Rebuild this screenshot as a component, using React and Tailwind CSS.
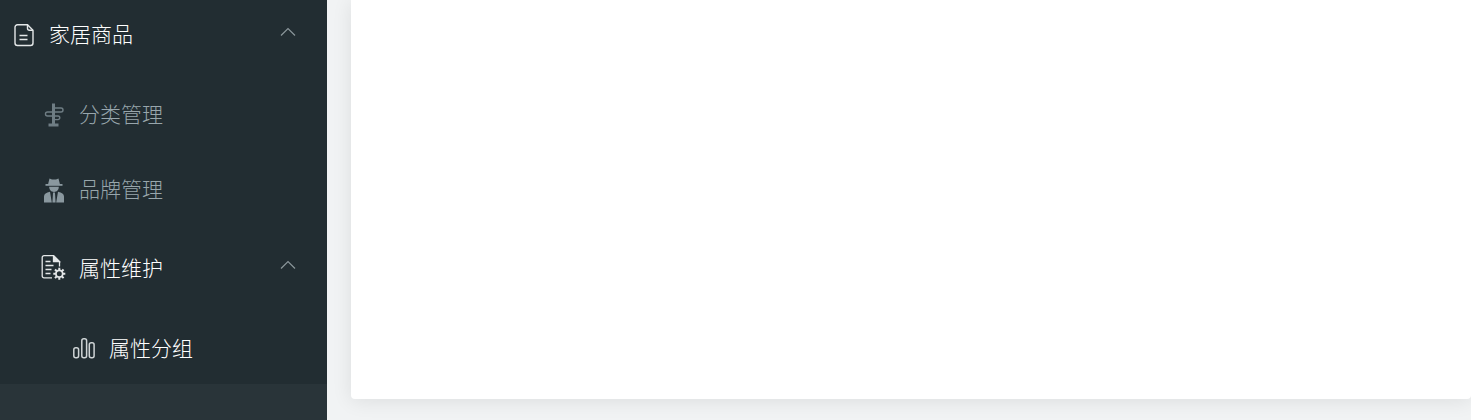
// Admin sidebar (scrolled) with an empty content card
const IconDoc = () => (
  <svg width="22" height="24" viewBox="0 0 22 24" fill="none" stroke="#e4e7e8" strokeWidth="1.400">
    <path d="M4.500 1.700h10l5.500 5.500v12.800a2.500 2.500 0 0 1-2.500 2.500h-13A2.500 2.500 0 0 1 2 20V4.200a2.500 2.500 0 0 1 2.500-2.500z" />
    <path d="M14.500 1.700v3.500a2 2 0 0 0 2 2H20" />
    <path d="M6.500 12.500h8M6.500 16.500h8" />
  </svg>
);

const IconSign = () => (
  <svg width="22" height="24" viewBox="0 0 22 24" fill="none" stroke="#6f7d84" strokeWidth="1.400">
    <path d="M10.500 0.500v21" strokeWidth="3" />
    <path d="M10.500 5h7.500a2 2 0 0 1 0 4H4.500a2 2 0 0 0 0 4H15a1.800 1.800 0 0 1 0 3.600h-4.500" />
    <path d="M5.500 22h10" strokeWidth="3" />
  </svg>
);

const IconSpy = () => (
  <svg width="22" height="25" viewBox="0 0 22 25" fill="#8a989f">
    <path d="M6.500 0.500l2.500 1h4l2.500-1 1.500 6H5z" />
    <path d="M2.500 6h17v1.800h-17z" />
    <path d="M6.200 8.700h9.600c0 3.200-2 5.200-4.800 5.200s-4.800-2-4.800-5.200z" />
    <path d="M1 24.500v-6c0-2.600 2.200-4 6-4.700l1.800 10.700zM21 24.500v-6c0-2.600-2.200-4-6-4.700l-1.800 10.700z" />
    <path d="M10 14.500h2l.6 10h-3.200z" />
  </svg>
);

const IconDocGear = () => (
  <svg width="26" height="26" viewBox="0 0 26 26" fill="none" stroke="#e4e7e8" strokeWidth="1.300">
    <path d="M11 22.800H3a1.800 1.800 0 0 1-1.800-1.800V2.500A1.800 1.800 0 0 1 3 .7h9.500l6 6v4.800" />
    <path d="M12.500 .7l6 6h-6z" fill="#e4e7e8" />
    <path d="M4.500 6.500h5M4.500 10.500h8M4.500 14.500h6M4.500 18.500h5" />
    <circle cx="18.300" cy="18.800" r="3.400" strokeWidth="1.800" />
    <path d="M18.300 12.800v2.400M18.300 22.400v2.400M12.300 18.800h2.400M21.900 18.800h2.400M14 14.500l1.800 1.800M20.800 21.300l1.800 1.800M14 23.100l1.800-1.800M20.800 16.300l1.800-1.800" strokeWidth="2" />
  </svg>
);

const IconBars = () => (
  <svg width="24" height="24" viewBox="0 0 24 24" fill="none" stroke="#cfd4d6" strokeWidth="1.500">
    <rect x="1.800" y="11.800" width="4.800" height="10" rx="2" />
    <rect x="9.800" y="2.800" width="4.800" height="19" rx="2" />
    <rect x="17.300" y="6.800" width="4.800" height="15" rx="2" />
  </svg>
);

const Chevron = () => (
  <svg width="16" height="10" viewBox="0 0 16 10" fill="none" stroke="#8b969b" strokeWidth="1.200" className="mb-[6px]">
    <path d="M1 8.500L8 1.500l7 7" />
  </svg>
);

export default function App() {
  return (
    <div className="flex h-[420px] w-[1471px] overflow-hidden bg-[#f1f3f4] font-['Noto_Sans_CJK_SC','Liberation_Sans',sans-serif]">
      <aside className="flex w-[327px] shrink-0 flex-col bg-[#222d32] text-[21px] font-light">
        {/* top level group */}
        <div className="mt-[7px] flex h-14 items-center pl-[13px] pr-[31px] text-white">
          <span className="flex w-[36px] shrink-0"><IconDoc /></span>
          <span className="flex-1 -translate-y-px">家居商品</span>
          <Chevron />
        </div>

        <div className="mt-6 flex h-14 items-center pl-[43px] text-[#98a6ac]">
          <span className="flex w-[36px] shrink-0"><IconSign /></span>
          <span className="-translate-y-px">分类管理</span>
        </div>

        <div className="mt-[19px] flex h-14 items-center pl-[43px] text-[#98a6ac]">
          <span className="flex w-[36px] shrink-0"><IconSpy /></span>
          <span className="-translate-y-px">品牌管理</span>
        </div>

        <div className="mt-[22px] flex h-14 items-center pl-[41px] pr-[31px] text-white">
          <span className="flex w-[38px] shrink-0"><IconDocGear /></span>
          <span className="flex-1">属性维护</span>
          <Chevron />
        </div>

        <div className="mt-6 flex h-14 items-center pl-[72px] text-white">
          <span className="flex w-[37px] shrink-0"><IconBars /></span>
          <span>属性分组</span>
        </div>

        <div className="mt-2 flex-1 bg-[#293439]" />
      </aside>

      <main className="flex-1 pl-6">
        <div className="h-[399px] rounded-b bg-white shadow-[0_2px_20px_0_rgba(0,0,0,0.09)]" />
      </main>
    </div>
  );
}
